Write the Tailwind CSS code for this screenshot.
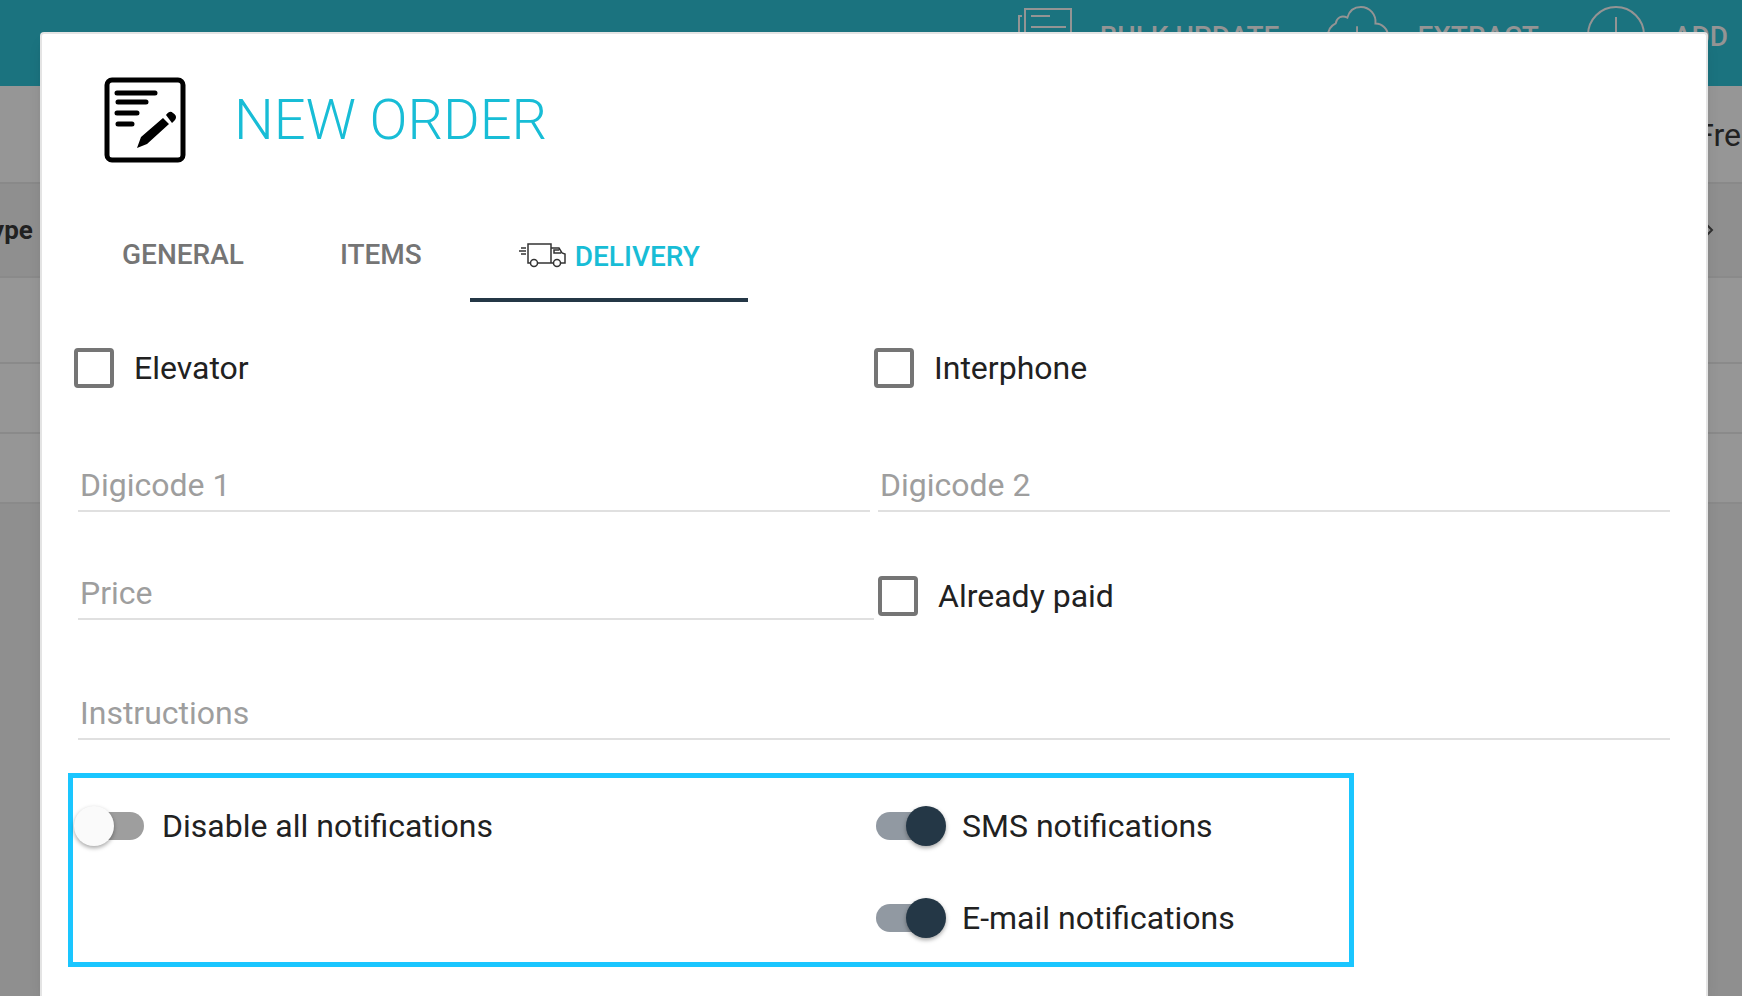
<!DOCTYPE html>
<html lang="en">
<head>
    <meta charset="UTF-8">
    <meta name="viewport" content="width=device-width, initial-scale=1.0">
    <title>New order</title>
    <script src="https://cdn.jsdelivr.net/npm/@tailwindcss/browser@4"></script>
</head>
<body class="relative h-screen overflow-hidden bg-[#8f8f8f] font-[Roboto,sans-serif] text-[#212121]">
    <!-- Page behind the dialog -->
    <header class="flex h-[86px] items-start justify-end gap-12 bg-[#1b737f] pt-[5px] pr-3.5 text-[28px] leading-[64px] font-medium text-[#949494]">
        <button type="button" class="flex h-16 items-center gap-7">
            <svg class="h-[58px] w-[54px]" viewBox="0 0 54 58" fill="none" stroke="currentColor" stroke-width="2">
                <path d="M7 1h46v48H7zM4 8H1v47h46v-6M13 8h19M13 19h35M13 30h35M13 39h35"/>
            </svg>
            BULK UPDATE
        </button>
        <button type="button" class="flex h-16 items-center gap-7">
            <svg class="h-16 w-[62px]" viewBox="0 0 64 64" fill="none" stroke="currentColor" stroke-width="2">
                <path d="M18 46h-3C7 46 1 39 1 31c0-7 4-11 8-13 1-6 6-9 12-6C23 5 28 1 35 1c9 0 16 8 15 17 7 0 13 6 13 13 0 9-6 15-13 15h-4M31 21v34M23 47l8 9 8-9"/>
            </svg>
            EXTRACT
        </button>
        <button type="button" class="flex h-16 items-center gap-7">
            <svg class="h-[62px] w-[58px]" viewBox="0 0 58 62" fill="none" stroke="currentColor" stroke-width="2">
                <circle cx="29" cy="29" r="28"/>
                <path d="M29 11v36M11 29h36"/>
            </svg>
            ADD
        </button>
    </header>
    <main>
        <div class="flex h-24 items-center justify-end bg-[#969696] pt-0.5 text-[32px]">
            <span class="-mr-4">Free</span>
        </div>
        <table class="-ml-6 w-[calc(100%+24px)] border-t-2 border-[#898989] bg-[#969696]">
            <thead>
                <tr class="h-[94px] border-b-2 border-[#8a8a8a] bg-[#8f8f8f] text-left text-[26px]">
                    <th class="font-bold">Type</th>
                    <th class="pr-[26px]">
                        <svg class="ml-auto h-4 w-3" viewBox="0 0 12 16" fill="none" stroke="#303030" stroke-width="2"><path d="M3 3l5 5-5 5"/></svg>
                    </th>
                </tr>
            </thead>
            <tbody>
                <tr class="h-[86px] border-b-2 border-[#8a8a8a]"><td></td><td></td></tr>
                <tr class="h-[70px] border-b-2 border-[#8a8a8a]"><td></td><td></td></tr>
                <tr class="h-[70px] border-b-2 border-[#8a8a8a]"><td></td><td></td></tr>
            </tbody>
        </table>
    </main>

    <!-- New order dialog -->
    <div role="dialog" aria-labelledby="dialog-title" class="absolute top-8 right-[34px] bottom-0 left-10 overflow-hidden rounded-t border-2 border-b-0 border-[#e4e4e4] bg-white px-8 shadow-lg">
        <div class="flex items-center gap-12 py-[43px] pl-[30px]">
            <svg class="h-[86px] w-[82px]" viewBox="0 0 82 86" fill="none" stroke="#000" stroke-linecap="round">
                <rect x="3" y="3" width="76" height="80" rx="5" stroke-width="5"/>
                <path stroke-width="5" d="M13 16h38M14 25h28M13 36h20M14 47h14"/>
                <path fill="#000" stroke="none" d="M59 41l6 6-22 20-10 4 4-11zM62 38c3-4 5-4 7-2 3 2 4 4 2 7l-3 3z"/>
            </svg>
            <h1 id="dialog-title" class="text-[56px] leading-[64px] font-light text-[#18bdd6]">NEW ORDER</h1>
        </div>

        <!-- Tabs -->
        <div role="tablist" class="flex h-24 text-[28px] font-medium text-[#757575]">
            <button type="button" role="tab" class="px-12 pt-0.5">GENERAL</button>
            <button type="button" role="tab" class="px-12 pt-0.5">ITEMS</button>
            <button type="button" role="tab" aria-selected="true" class="flex items-center gap-2 border-b-4 border-[#243746] px-12 pt-2.5 text-[#18bdd6]">
                <svg class="h-7 w-[49px]" viewBox="0 0 49 28" fill="none" stroke="#333" stroke-width="1.5">
                    <path d="M13 20h-3V1h23v19H19M33 20h3M42 20h5v-9l-3-1-3-5h-8M43 10h-7V7h5M1 8h7M3 5h5M3 11h5"/>
                    <circle cx="16" cy="20" r="3.5" fill="#fff"/>
                    <circle cx="39" cy="20" r="3.5" fill="#fff"/>
                </svg>
                DELIVERY
            </button>
        </div>

        <!-- Delivery form -->
        <form class="pt-[46px] text-[32px] leading-10">
            <div class="grid grid-cols-2">
                <label class="flex items-center gap-5">
                    <input type="checkbox" class="size-10 appearance-none rounded border-4 border-[#757575]">
                    Elevator
                </label>
                <label class="flex items-center gap-5">
                    <input type="checkbox" class="size-10 appearance-none rounded border-4 border-[#757575]">
                    Interphone
                </label>
            </div>
            <div class="mt-[76px] grid grid-cols-2">
                <input type="text" aria-label="Digicode 1" placeholder="Digicode 1" class="mx-1 h-12 border-b-2 border-[#e0e0e0] pb-1 pl-0.5 placeholder:text-[#9e9e9e]">
                <input type="text" aria-label="Digicode 2" placeholder="Digicode 2" class="mx-1 h-12 border-b-2 border-[#e0e0e0] pb-1 pl-0.5 placeholder:text-[#9e9e9e]">
            </div>
            <div class="mt-[60px] grid grid-cols-2">
                <input type="text" aria-label="Price" placeholder="Price" class="ml-1 h-12 border-b-2 border-[#e0e0e0] pb-1 pl-0.5 placeholder:text-[#9e9e9e]">
                <label class="ml-1 flex items-center gap-5">
                    <input type="checkbox" class="size-10 appearance-none rounded border-4 border-[#757575]">
                    Already paid
                </label>
            </div>
            <div class="mt-[72px] flex px-1">
                <input type="text" aria-label="Instructions" placeholder="Instructions" class="h-12 w-full border-b-2 border-[#e0e0e0] pb-1 pl-0.5 placeholder:text-[#9e9e9e]">
            </div>
            <div class="relative mt-[33px] grid grid-cols-2 gap-y-[52px] pt-[33px] pb-[29px]">
                <div class="pointer-events-none absolute inset-y-0 right-1/5 -left-1.5 border-5 border-[#1ac6ff]"></div>
                <label class="flex items-center gap-4">
                    <input type="checkbox" role="switch" class="relative h-10 w-[72px] appearance-none before:absolute before:inset-x-0.5 before:inset-y-1.5 before:rounded-full before:bg-[#9e9e9e] after:absolute after:left-0 after:size-10 after:rounded-full after:bg-[#fafafa] after:shadow-[0_2px_4px_rgba(0,0,0,0.35)] checked:before:bg-[#9199a2] checked:after:left-8 checked:after:bg-[#243746]">
                    Disable all notifications
                </label>
                <label class="flex items-center gap-4">
                    <input type="checkbox" role="switch" checked class="relative h-10 w-[72px] appearance-none before:absolute before:inset-x-0.5 before:inset-y-1.5 before:rounded-full before:bg-[#9e9e9e] after:absolute after:left-0 after:size-10 after:rounded-full after:bg-[#fafafa] after:shadow-[0_2px_4px_rgba(0,0,0,0.35)] checked:before:bg-[#9199a2] checked:after:left-8 checked:after:bg-[#243746]">
                    SMS notifications
                </label>
                <label class="col-start-2 flex items-center gap-4">
                    <input type="checkbox" role="switch" checked class="relative h-10 w-[72px] appearance-none before:absolute before:inset-x-0.5 before:inset-y-1.5 before:rounded-full before:bg-[#9e9e9e] after:absolute after:left-0 after:size-10 after:rounded-full after:bg-[#fafafa] after:shadow-[0_2px_4px_rgba(0,0,0,0.35)] checked:before:bg-[#9199a2] checked:after:left-8 checked:after:bg-[#243746]">
                    E-mail notifications
                </label>
            </div>
        </form>
    </div>
</body>
</html>
